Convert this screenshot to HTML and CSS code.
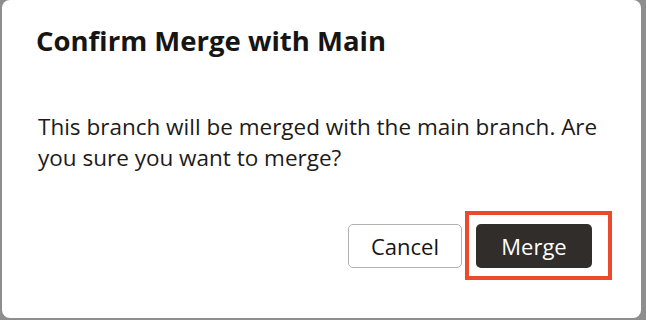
FILE: index.html
```html
<!DOCTYPE html>
<html lang="en">
<head>
<meta charset="utf-8">
<title>Confirm Merge with Main</title>
<link rel="stylesheet" href="styles.css">
</head>
<body>
<div class="dialog" role="dialog" aria-labelledby="dlg-title">
  <h1 class="dialog-title" id="dlg-title">Confirm Merge with Main</h1>
  <p class="dialog-body">This branch will be merged with the main branch. Are you sure you want to merge?</p>
  <div class="dialog-actions">
    <button class="btn btn-outline" type="button">Cancel</button>
    <span class="highlight"><button class="btn btn-primary" type="button">Merge</button></span>
  </div>
</div>
</body>
</html>
```

FILE: styles.css
```css
html, body {
  margin: 0;
  padding: 0;
  background: #8e8e8e;
  height: 320px;
  overflow: hidden;
}

.dialog {
  box-sizing: border-box;
  width: 639px;
  height: 318px;
  margin-left: 2px;
  background: #ffffff;
  border-radius: 8px;
  display: flex;
  flex-direction: column;
  padding: 23px 0 0 34px;
  font-family: "Open Sans", "Noto Sans", sans-serif;
  color: #161513;
}

.dialog-title {
  margin: 0;
  font-size: 27.5px;
  line-height: 36px;
  font-weight: 700;
  letter-spacing: 0;
}

.dialog-body {
  margin: 52px 26px 0 2px;
  font-size: 22.5px;
  line-height: 31px;
  font-weight: 400;
  color: #1d1b19;
}

.dialog-actions {
  display: flex;
  justify-content: flex-end;
  gap: 14px;
  margin-top: auto;
  padding: 0 49px 50px 0;
}

.btn {
  box-sizing: border-box;
  height: 44px;
  padding: 0;
  font-family: inherit;
  font-size: 22px;
  border-radius: 5px;
  cursor: pointer;
}

.btn-outline {
  width: 114px;
  background: #ffffff;
  border: 1px solid #b3b1ae;
  color: #161513;
}

.btn-primary {
  width: 116px;
  background: #312d2a;
  border: none;
  color: #ffffff;
}

.highlight {
  position: relative;
  display: flex;
}

.highlight::after {
  content: "";
  position: absolute;
  top: -13px;
  right: -20px;
  bottom: -12px;
  left: -11px;
  border: 4px solid #ec4a2c;
  pointer-events: none;
}
```
